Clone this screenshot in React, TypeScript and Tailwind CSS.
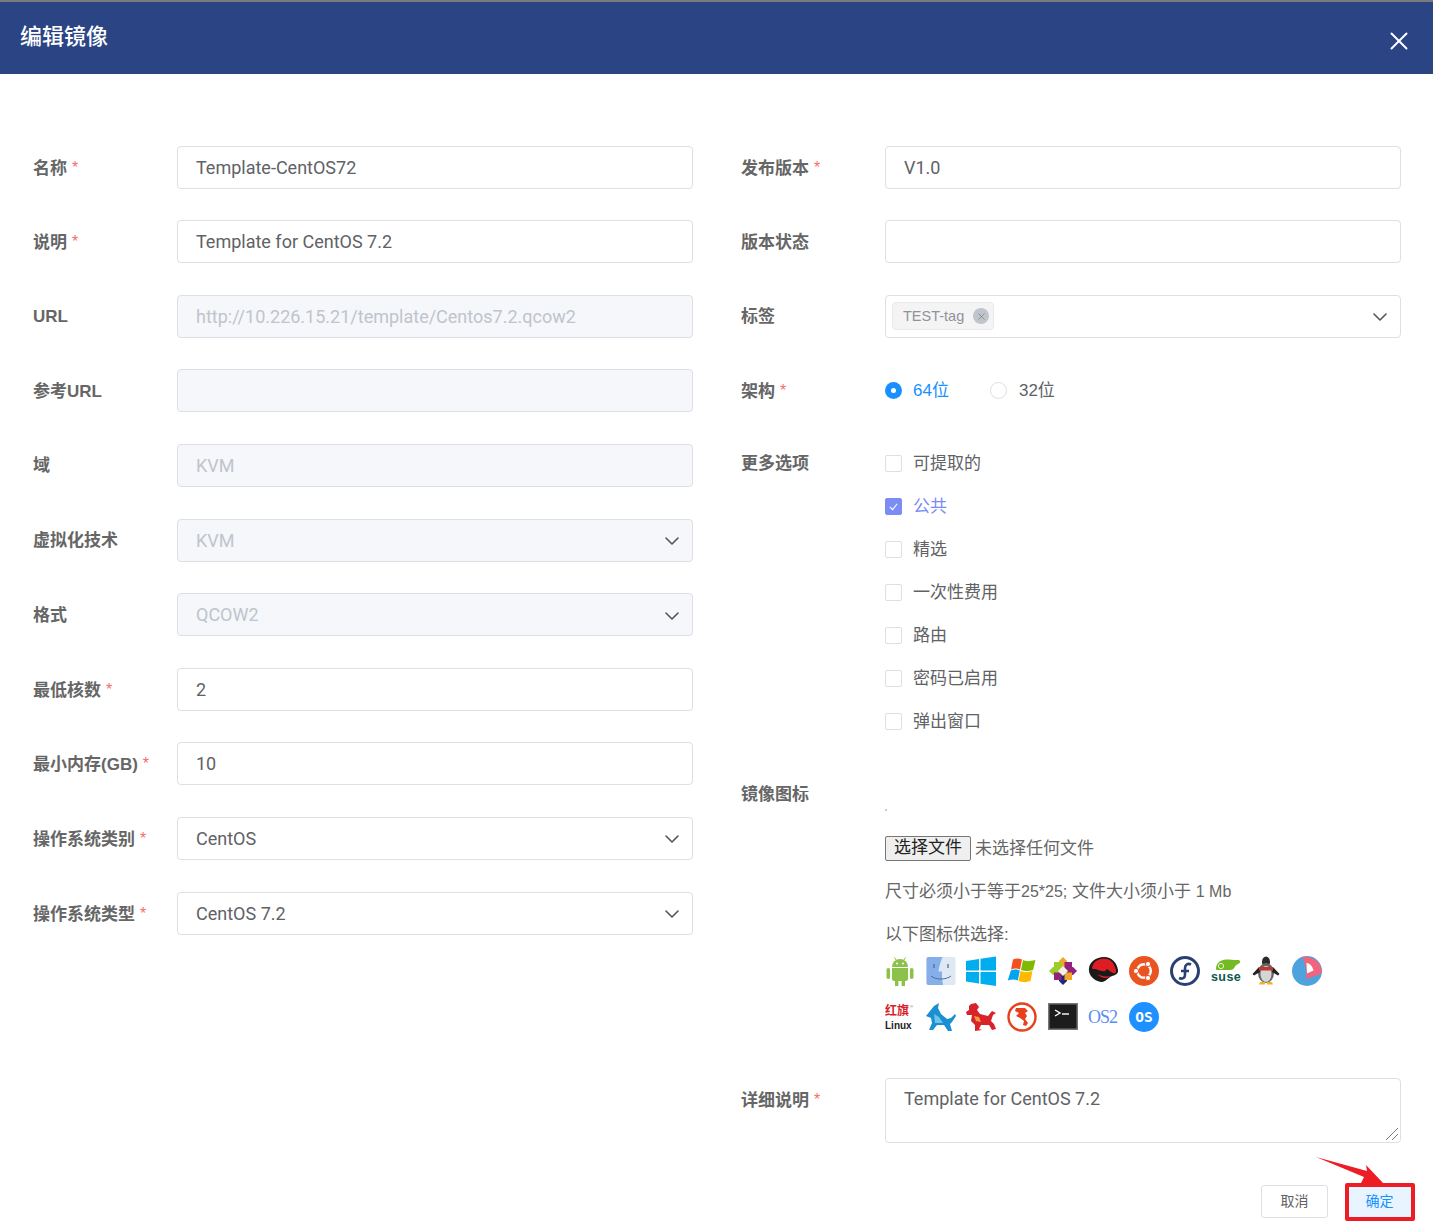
import React from 'react';
import { ChevronDown, X } from 'lucide-react';
import clsx from 'clsx';

const ARIAL = "font-['Liberation_Sans','Noto_Sans_CJK_SC',sans-serif]";
const INPUT_FONT = "font-['Roboto','Noto_Sans_CJK_SC',sans-serif]";

const Label: React.FC<{ text: string; required?: boolean }> = ({ text, required }) => (
  <label className="block w-[144px] shrink-0 translate-y-[1px] text-[17px] leading-[24px] font-bold text-[#666]">
    {text}
    {required && <span className="ml-[5px] align-[1px] text-[16px] font-normal text-[#f56c6c]">*</span>}
  </label>
);

const Arrow: React.FC = () => (
  <ChevronDown className="mt-[2px] h-[24px] w-[24px] shrink-0 text-[#555]" strokeWidth={1.6} />
);

const Field: React.FC<{ disabled?: boolean; select?: boolean; children?: React.ReactNode }> = ({
  disabled,
  select,
  children,
}) => (
  <div
    className={clsx(
      INPUT_FONT,
      'flex h-[43px] flex-1 items-center justify-between rounded-[4px] border border-[#dcdfe6] pl-[18px] pr-[8px] text-[18px]',
      disabled ? 'bg-[#f5f7fa] text-[#c0c4cc]' : 'bg-white text-[#606266]'
    )}>
    <span className="truncate">{children}</span>
    {select && <Arrow />}
  </div>
);

const Row: React.FC<{
  label: string;
  required?: boolean;
  value?: string;
  disabled?: boolean;
  select?: boolean;
}> = ({ label, required, value, disabled, select }) => (
  <div className="mb-[31.6px] flex items-center">
    <Label text={label} required={required} />
    <Field disabled={disabled} select={select}>
      {value}
    </Field>
  </div>
);

const Check: React.FC<{ text: string; checked?: boolean }> = ({ text, checked }) => (
  <div className="flex h-[43px] items-center">
    <span
      className={clsx(
        'flex h-[17px] w-[17px] items-center justify-center rounded-[2px] border',
        checked ? 'border-[#7b8cf5] bg-[#7b8cf5]' : 'border-[#dcdfe6] bg-white'
      )}>
      {checked && (
        <svg viewBox="0 0 12 12" className="h-[11px] w-[11px]" fill="none" stroke="#fff" strokeWidth="1.2">
          <path d="M2 6.5l3 3 5-6.5" />
        </svg>
      )}
    </span>
    <span className={clsx('ml-[11px] text-[17px]', checked ? 'text-[#7b8cf5]' : 'text-[#606266]')}>{text}</span>
  </div>
);

const icons: React.ReactNode[] = [
  // android
  <g fill="#8cc14a">
    <path d="M7 11a8 8 0 0 1 16 0z" />
    <path d="M7 12h16v11a2 2 0 0 1-2 2h-1v4a1.7 1.7 0 0 1-3.4 0v-4h-3.2v4a1.7 1.7 0 0 1-3.4 0v-4H9a2 2 0 0 1-2-2z" />
    <rect x="1.5" y="12" width="3.6" height="11" rx="1.8" />
    <rect x="24.9" y="12" width="3.6" height="11" rx="1.8" />
    <path d="M9.5 1.5l2.5 4M20.5 1.5l-2.5 4" stroke="#8cc14a" strokeWidth="1" />
    <circle cx="12" cy="7.5" r="1" fill="#fff" />
    <circle cx="18" cy="7.5" r="1" fill="#fff" />
  </g>,
  // finder
  <g>
    <rect x="0.5" y="1" width="29" height="28" rx="2" fill="#dfe9f3" />
    <path d="M2.5 1h14c-2 5-3.5 10-4 14.5h3.5c-.3 4 .3 9 1 13.5H2.5a2 2 0 0 1-2-2V3a2 2 0 0 1 2-2z" fill="#86aee8" />
    <path d="M8 8v4M22 8v4" stroke="#4a6fa8" strokeWidth="1.3" />
    <path d="M5 20c5 4 15 4 20 0" stroke="#4a6fa8" strokeWidth="1" fill="none" />
  </g>,
  // windows 8
  <path fill="#00adef" d="M0 5l13-2v11.5H0zM14.5 2.8L30 .5v14H14.5zM0 16h13v11.5L0 25.5zM14.5 16H30v14l-15.5-2.3z" />,
  // windows flag
  <g>
    <path fill="#f25022" d="M6 3.5c3-1.5 6-1.5 9 0l-2 10c-3-1.5-6-1.5-9 0z" />
    <path fill="#7fba00" d="M16 4c3 1.5 6 1.5 12.5 0l-2.5 10c-4 1.5-8 1.5-12 0z" />
    <path fill="#00a4ef" d="M3.8 14.5c3-1.5 6-1.5 9 0l-2 10c-3-1.5-6-1.5-10 0z" />
    <path fill="#ffb900" d="M13.5 15c4 1.5 8 1.5 12 0l-2 10c-4 1.5-8 1.5-12 0z" />
  </g>,
  // centos
  <g>
    <path fill="#efa724" d="M15 1l4 4v8h-8V5z" />
    <path fill="#932279" d="M29 15l-4 4h-8v-8h8z" />
    <path fill="#262577" d="M15 29l-4-4v-8h8v8z" />
    <path fill="#9ccd2a" d="M1 15l4-4h8v8H5z" />
    <rect x="6" y="6" width="7.5" height="7.5" fill="#9ccd2a" />
    <rect x="16.5" y="6" width="7.5" height="7.5" fill="#932279" />
    <rect x="6" y="16.5" width="7.5" height="7.5" fill="#932279" />
    <rect x="16.5" y="16.5" width="7.5" height="7.5" fill="#efa724" />
    <path d="M15 10l5 5-5 5-5-5z" fill="#f4f1ea" />
  </g>,
  // redhat
  <g>
    <path fill="#1a1a1a" d="M1 13C1 6 8 1 16 1s13 6 14 13c.5 4-3 5-6 6-4 2-7 6-10 6C8 26 0 20 1 13z" />
    <path fill="#dd1c23" d="M4 12c1-6 6-9.5 12-9.5S25 6 27 11c1 3 1.5 5 .5 6-3 1.5-6-3-9-4l-1 2c-3 1-7-1-10-2-2 0-3.5 0-3.5-1z" />
    <path fill="#dd1c23" d="M9 18c4 2 9 3 14 2-4 3-9 3-14-2z" />
  </g>,
  // ubuntu
  <g>
    <circle cx="15" cy="15" r="15" fill="#e95420" />
    <circle cx="15" cy="15" r="6.8" fill="none" stroke="#fff" strokeWidth="2.4" />
    <circle cx="7" cy="15" r="2.6" fill="#fff" stroke="#e95420" strokeWidth="1" />
    <circle cx="19" cy="8" r="2.6" fill="#fff" stroke="#e95420" strokeWidth="1" />
    <circle cx="19" cy="22" r="2.6" fill="#fff" stroke="#e95420" strokeWidth="1" />
  </g>,
  // fedora
  <g>
    <circle cx="15" cy="15" r="13.5" fill="#fff" stroke="#294172" strokeWidth="3" />
    <path d="M21 8.5c-3-1.5-6 0-6 3.5v7c0 3-3 4.5-6 3M11 15h8" fill="none" stroke="#294172" strokeWidth="2.6" />
  </g>,
  // suse
  <g>
    <path fill="#73ba25" d="M5 13c0-6 5-9.5 10-9.5 4 0 7 .5 12 .5 2.5 0 3 2.5 1 3.5-2 1-3 1.5-4 3-1.5 3-3 3.5-6 3.5H8c-2 0-3 0-3-1z" />
    <circle cx="10" cy="10" r="2.6" fill="none" stroke="#e6f3d4" strokeWidth="1" />
    <text x="0" y="25" fontSize="12.5" fontWeight="700" letterSpacing="0.4" fill="#0c5a4a" fontFamily="'Liberation Sans',sans-serif">suse</text>
  </g>,
  // penguin
  <g>
    <ellipse cx="15" cy="6" rx="4" ry="5.5" fill="#2a2a2a" />
    <ellipse cx="15" cy="17" rx="8" ry="10" fill="#666" />
    <ellipse cx="15" cy="18" rx="5.5" ry="8" fill="#d5d5d5" />
    <path d="M8 11L1.5 18l1.5 1.5L9 16zM22 11l6.5 7-1.5 1.5L21 16z" fill="#222" />
    <rect x="8" y="11" width="14" height="3.5" fill="#c0392b" />
    <path d="M9 26h5v2.5H8zM16 26h5l1 2.5h-6z" fill="#f3b229" />
  </g>,
  // blue circle
  <g>
    <circle cx="15" cy="15" r="15" fill="#4fa3dc" />
    <path fill="#f2647c" d="M10 1c9-1 15 3 18 8 2 4 2 7 1 9l-15 5c1-7 0-15-4-22z" />
    <path fill="#fff" d="M14.5 7c3 0 6 3 7 7.5l-6.5 3z" />
  </g>,
  // hongqi linux
  <g>
    <text x="0" y="13" fontSize="12" fontWeight="700" fill="#d8232a" fontFamily="'Noto Sans CJK SC',sans-serif">红旗</text>
    <text x="25" y="6" fontSize="4" fill="#666" fontFamily="'Liberation Sans',sans-serif">®</text>
    <text x="0" y="27" fontSize="10" fontWeight="700" fill="#222" fontFamily="'Liberation Sans',sans-serif">Linux</text>
  </g>,
  // blue beast
  <g>
    <path fill="#1a8fd1" d="M13 1L12 6l3 6 6 5 4-1 4-4 1 2-4 6-2 2 2 7h-4l-4-6h-7l-4 5H3l3-7-1-5-5-2 4-5 4-5z" />
    <path fill="#6cc3ec" d="M8 12l5 3 4 6H9z" />
  </g>,
  // red beast
  <g>
    <path fill="#d8232a" d="M5 2l5-1 3 4-2 3 3 4 8 2 4-5 4 2-3 2-2 6 3 3 2 5-4 1-3-5h-8l-2 4 3 1-7 1v-6l-4-4 1-6H1l-1-3 3-2V4z" />
    <path fill="#f39a3c" d="M8 14l5 1 2 5-5-1z" />
  </g>,
  // red circle
  <g>
    <circle cx="15" cy="15" r="13.5" fill="#fff" stroke="#e8401c" strokeWidth="2.4" />
    <path fill="#e8401c" d="M9 6h9l3 3-3 2 2 3-2 3 3 4-2 3-3-1 1-4-4-3-4-2 3-3-4-2z" />
  </g>,
  // terminal
  <g>
    <rect x="0" y="1" width="30" height="27" fill="#777" />
    <rect x="1.5" y="2.5" width="27" height="24" fill="#1c1c1c" />
    <path d="M7 8l5 3-5 3" stroke="#fff" strokeWidth="1.4" fill="none" />
    <path d="M14 12h7" stroke="#fff" strokeWidth="1.4" />
  </g>,
  // os/2
  <text x="0" y="21" fontSize="18" fill="#5b8df0" letterSpacing="-1" fontFamily="'Liberation Serif',serif">OS2</text>,
  // os
  <g>
    <circle cx="15" cy="15" r="15" fill="#1e90ff" />
    <text x="15" y="20" fontSize="14.5" fontWeight="700" fill="#fff" textAnchor="middle" fontFamily="'DejaVu Sans Mono',monospace">OS</text>
  </g>,
];

const App: React.FC = () => {
  return (
    <div className={clsx(ARIAL, 'h-[1232px] w-[1433px] overflow-hidden bg-white')}>
      <header className="flex h-[74px] items-center justify-between border-t-2 border-[#7a7a7a] bg-[#2a4484] pl-[20px] pr-[19px]">
        <h1 className="-mt-[4px] text-[22px] font-medium text-white">编辑镜像</h1>
        <X className="mt-[6px] h-[30px] w-[30px] text-white" strokeWidth={1.6} />
      </header>

      <div className="flex gap-[48px] pl-[33px] pr-[32px] pt-[71.6px]">
        <div className="w-[660px]">
          <Row label="名称" required value="Template-CentOS72" />
          <Row label="说明" required value="Template for CentOS 7.2" />
          <Row label="URL" disabled value="http://10.226.15.21/template/Centos7.2.qcow2" />
          <Row label="参考URL" disabled />
          <Row label="域" disabled value="KVM" />
          <Row label="虚拟化技术" disabled select value="KVM" />
          <Row label="格式" disabled select value="QCOW2" />
          <Row label="最低核数" required value="2" />
          <Row label="最小内存(GB)" required value="10" />
          <Row label="操作系统类别" required select value="CentOS" />
          <Row label="操作系统类型" required select value="CentOS 7.2" />
        </div>

        <div className="w-[660px]">
          <Row label="发布版本" required value="V1.0" />
          <Row label="版本状态" />
          <div className="mb-[31.6px] flex items-center">
            <Label text="标签" />
            <div className="flex h-[43px] flex-1 items-center justify-between rounded-[4px] border border-[#dcdfe6] pl-[6px] pr-[8px]">
              <span className="flex h-[28px] items-center rounded-[4px] border border-[#e9e9eb] bg-[#f4f4f5] pl-[10px] pr-[4px] text-[14.5px] text-[#909399]">
                <span className="translate-y-[1px]">TEST-tag</span>
                <span className="ml-[9px] flex h-[16px] w-[16px] items-center justify-center rounded-full bg-[#c0c4cc]">
                  <X className="h-[11px] w-[11px] text-[#777]" strokeWidth={1.5} />
                </span>
              </span>
              <Arrow />
            </div>
          </div>

          <div className="mb-[40px] flex h-[43px] items-center">
            <Label text="架构" required />
            <span className="flex h-[17px] w-[17px] items-center justify-center rounded-full bg-[#1890ff]">
              <span className="h-[5px] w-[5px] rounded-full bg-white" />
            </span>
            <span className="ml-[11px] text-[17px] text-[#1890ff]">64位</span>
            <span className="ml-[41px] h-[17px] w-[17px] rounded-full border border-[#dcdfe6]" />
            <span className="ml-[12px] text-[17px] text-[#606266]">32位</span>
          </div>

          <div className="flex">
            <div className="-mt-[1px] shrink-0">
              <Label text="更多选项" />
            </div>
            <div className="-mt-[10px]">
              <Check text="可提取的" />
              <Check text="公共" checked />
              <Check text="精选" />
              <Check text="一次性费用" />
              <Check text="路由" />
              <Check text="密码已启用" />
              <Check text="弹出窗口" />
            </div>
          </div>

          <div className="mt-[38.5px] flex">
            <Label text="镜像图标" />
            <div className="flex-1 text-[17px] text-[#666]">
              <div className="mt-[27px] h-[2px] w-[2px] bg-[#ccc]" />
              <div className="mt-[25px] flex h-[25px] items-center">
                <button className="h-[25px] w-[86px] rounded-[2px] border border-[#767676] bg-[#efefef] text-[17px] leading-[22px] text-[#222]">
                  选择文件
                </button>
                <span className="ml-[4px]">未选择任何文件</span>
              </div>
              <p className="mt-[18px] leading-[25px]">
                尺寸必须小于等于<span className="text-[16px]">25*25;</span> 文件大小须小于{' '}
                <span className="text-[16px]">1 Mb</span>
              </p>
              <p className="mt-[18px] leading-[25px]">以下图标供选择:</p>
              <div className="mt-[9px] flex w-[450px] flex-wrap gap-x-[10.7px] gap-y-[16px]">
                {icons.map((icon, i) => (
                  <svg key={i} viewBox="0 0 30 30" className="h-[30px] w-[30px]">
                    {icon}
                  </svg>
                ))}
              </div>
            </div>
          </div>

          <div className="mt-[46px] flex">
            <div className="shrink-0 pt-[9px]">
              <Label text="详细说明" required />
            </div>
            <div className={clsx(INPUT_FONT, 'relative h-[65px] flex-1 rounded-[4px] border border-[#dcdfe6] pl-[18px] pt-[6px] text-[18px] leading-[27px] text-[#606266]')}>
              Template for CentOS 7.2
              <svg viewBox="0 0 14 14" className="absolute bottom-[1px] right-[1px] h-[14px] w-[14px]" stroke="#555" strokeWidth="0.8">
                <path d="M1 13L13 1M7 13l6-6" />
              </svg>
            </div>
          </div>

          <div className="mt-[42px] flex justify-end gap-[19px]">
            <button className="h-[33px] w-[67px] rounded-[3px] border border-[#dcdfe6] bg-white text-[14px] text-[#606266]">
              取消
            </button>
            <button className="-mr-[13px] h-[33px] w-[67px] rounded-[3px] bg-[#e8f4ff] pr-[2px] text-[14px] text-[#1890ff]">
              确定
            </button>
          </div>
        </div>
      </div>

      {/* red annotation drawn over the button */}
      <div className="absolute left-[1345px] top-[1183px] h-[38px] w-[70px] rounded-[2px] border-[4px] border-[#ee1c25]" />
      <svg viewBox="0 0 70 30" className="absolute left-[1315px] top-[1155px] h-[30px] w-[70px]">
        <path fill="#ee1c25" d="M1 2L52 16L51 10L68 28L46 28L49 22Z" />
      </svg>
    </div>
  );
};

export default App;
